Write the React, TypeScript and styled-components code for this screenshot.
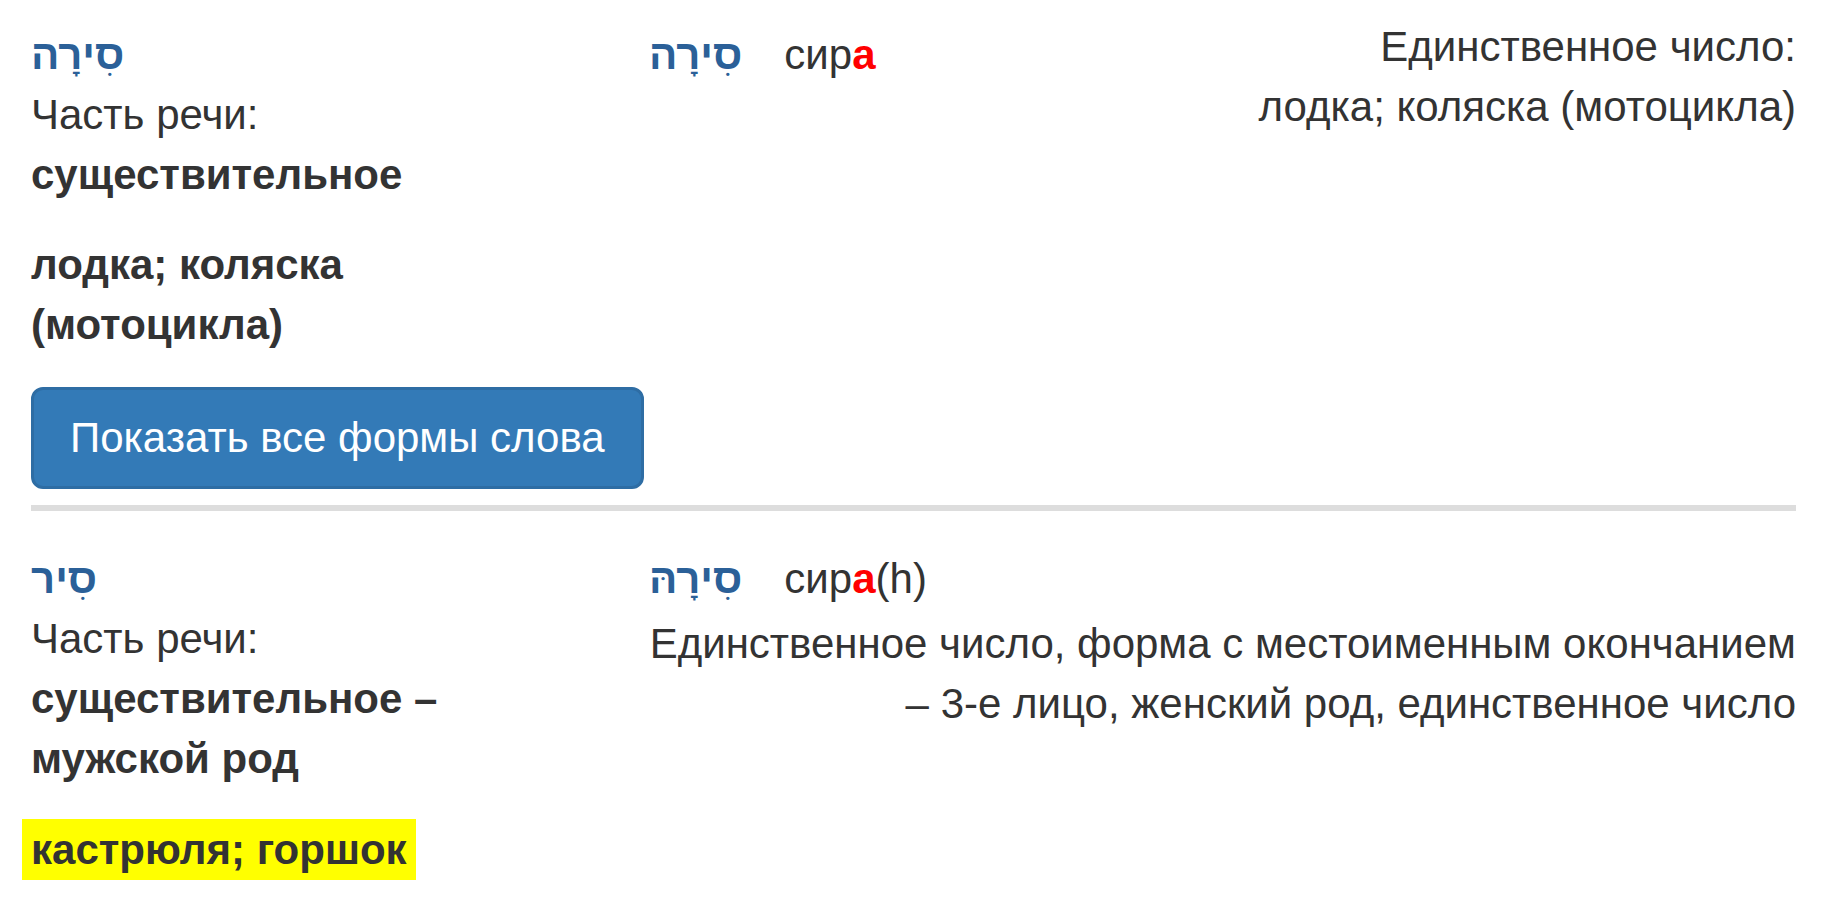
import React from 'react';
import styled, { createGlobalStyle } from 'styled-components';

const GlobalStyle = createGlobalStyle`
    body {
        margin: 0;
        background: #fff;
        color: #333;
        font-family: 'Liberation Sans', Arial, 'DejaVu Sans', sans-serif;
        font-size: 42px;
        line-height: 60px;
    }
`;

const Page = styled.div`
    padding: 0 27px 18px 31px;
`;

const Entry = styled.section<{ $top: number }>`
    display: grid;
    grid-template-columns: 528px 1fr;
    column-gap: 90px;
    padding-top: ${(p) => p.$top}px;
`;

const Column = styled.div`
    min-width: 0;
`;

const Hebrew = styled.span`
    font-weight: bold;
    color: #2b6098;
`;

const Title = styled(Hebrew)`
    display: block;
    line-height: 60px;
`;

const Label = styled.div``;

const PartOfSpeech = styled.div`
    font-weight: bold;
`;

const Meaning = styled.p`
    margin: 30px 0 0;
    font-weight: bold;
`;

const ShowFormsButton = styled.button`
    margin-top: 32px;
    display: inline-block;
    white-space: nowrap;
    font: inherit;
    line-height: 60px;
    color: #fff;
    background-color: #337ab7;
    border: 3px solid #2e6da4;
    border-radius: 12px;
    padding: 18px 36px;
    cursor: pointer;
`;

const Divider = styled.hr`
    border: 0;
    height: 6px;
    background: #ddd;
    margin: 16px 0 38px;
`;

const FormHead = styled.div`
    display: flex;
    justify-content: space-between;
    align-items: flex-start;
`;

const Form = styled.div`
    white-space: nowrap;

    ${Hebrew} {
        margin-right: 42px;
    }
`;

const Ending = styled.span`
    color: #f00;
    font-weight: bold;
`;

const Grammar = styled.div<{ $shift?: number }>`
    text-align: right;
    margin-top: ${(p) => p.$shift ?? 0}px;
`;

const Highlight = styled.mark`
    display: inline-block;
    margin-left: -9px;
    padding: 0 9px;
    line-height: 61px;
    background: #ff0;
    color: #333;
    font-weight: bold;
`;

const App: React.FC = () => {
    return (
        <Page>
            <GlobalStyle />
            <Entry $top={25}>
                <Column>
                    <Title>סִירָה</Title>
                    <Label>Часть речи:</Label>
                    <PartOfSpeech>существительное</PartOfSpeech>
                    <Meaning>лодка; коляска (мотоцикла)</Meaning>
                    <ShowFormsButton>Показать все формы слова</ShowFormsButton>
                </Column>
                <Column>
                    <FormHead>
                        <Form>
                            <Hebrew>סִירָה</Hebrew>
                            сир<Ending>а</Ending>
                        </Form>
                        <Grammar $shift={-8}>
                            Единственное число:
                            <br />
                            лодка; коляска (мотоцикла)
                        </Grammar>
                    </FormHead>
                </Column>
            </Entry>
            <Divider />
            <Entry $top={0}>
                <Column>
                    <Title>סִיר</Title>
                    <Label>Часть речи:</Label>
                    <PartOfSpeech>существительное – мужской род</PartOfSpeech>
                    <Meaning>
                        <Highlight>кастрюля; горшок</Highlight>
                    </Meaning>
                </Column>
                <Column>
                    <Form>
                        <Hebrew>סִירָהּ</Hebrew>
                        сир<Ending>а</Ending>(h)
                    </Form>
                    <Grammar $shift={5}>
                        Единственное число, форма с местоименным окончанием – 3-е лицо, женский род, единственное
                        число
                    </Grammar>
                </Column>
            </Entry>
        </Page>
    );
};

export default App;
